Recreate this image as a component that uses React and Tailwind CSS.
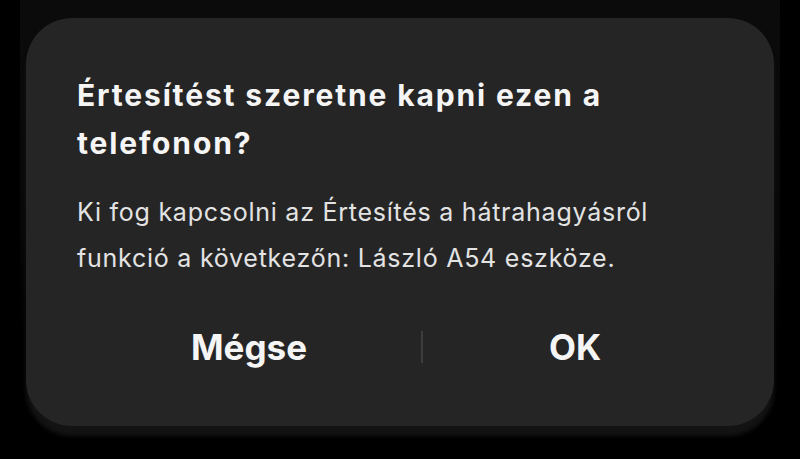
import React from 'react';

// Samsung-style confirmation dialog (dark)
const App = () => {
  return (
    <div className="w-[800px] h-[459px] bg-black overflow-hidden font-['Inter',sans-serif]">
      <div className="mx-[20px] h-full bg-gradient-to-b from-[#0b0b0b] via-[#080808] to-black pt-[18px] px-[6px]">
        <div className="h-[408px] rounded-[46px] bg-[#252525] shadow-[0_10px_4px_#131313] pl-[51px] pt-[53px] flex flex-col">
          <h1 className="text-[30px] leading-[48px] font-bold tracking-[1.85px] text-[#f5f5f5] w-[640px]">
            Értesítést szeretne kapni ezen a telefonon?
          </h1>
          <p className="mt-[22px] text-[25px] leading-[46px] tracking-[0.75px] text-[#e3e3e3]">
            Ki fog kapcsolni az Értesítés a hátrahagyásról
            <br />
            funkció a következőn: László A54 eszköze.
          </p>
          <div className="mt-[44px] flex items-center">
            <button className="w-[344px] text-center text-[35px] leading-[44px] font-bold text-[#f5f5f5]">
              Mégse
            </button>
            <div className="w-[2px] h-[32px] bg-[#3d3d3d]" />
            <button className="w-[304px] text-center text-[35px] leading-[44px] font-bold text-[#f5f5f5]">
              OK
            </button>
          </div>
        </div>
      </div>
    </div>
  );
};

export default App;
